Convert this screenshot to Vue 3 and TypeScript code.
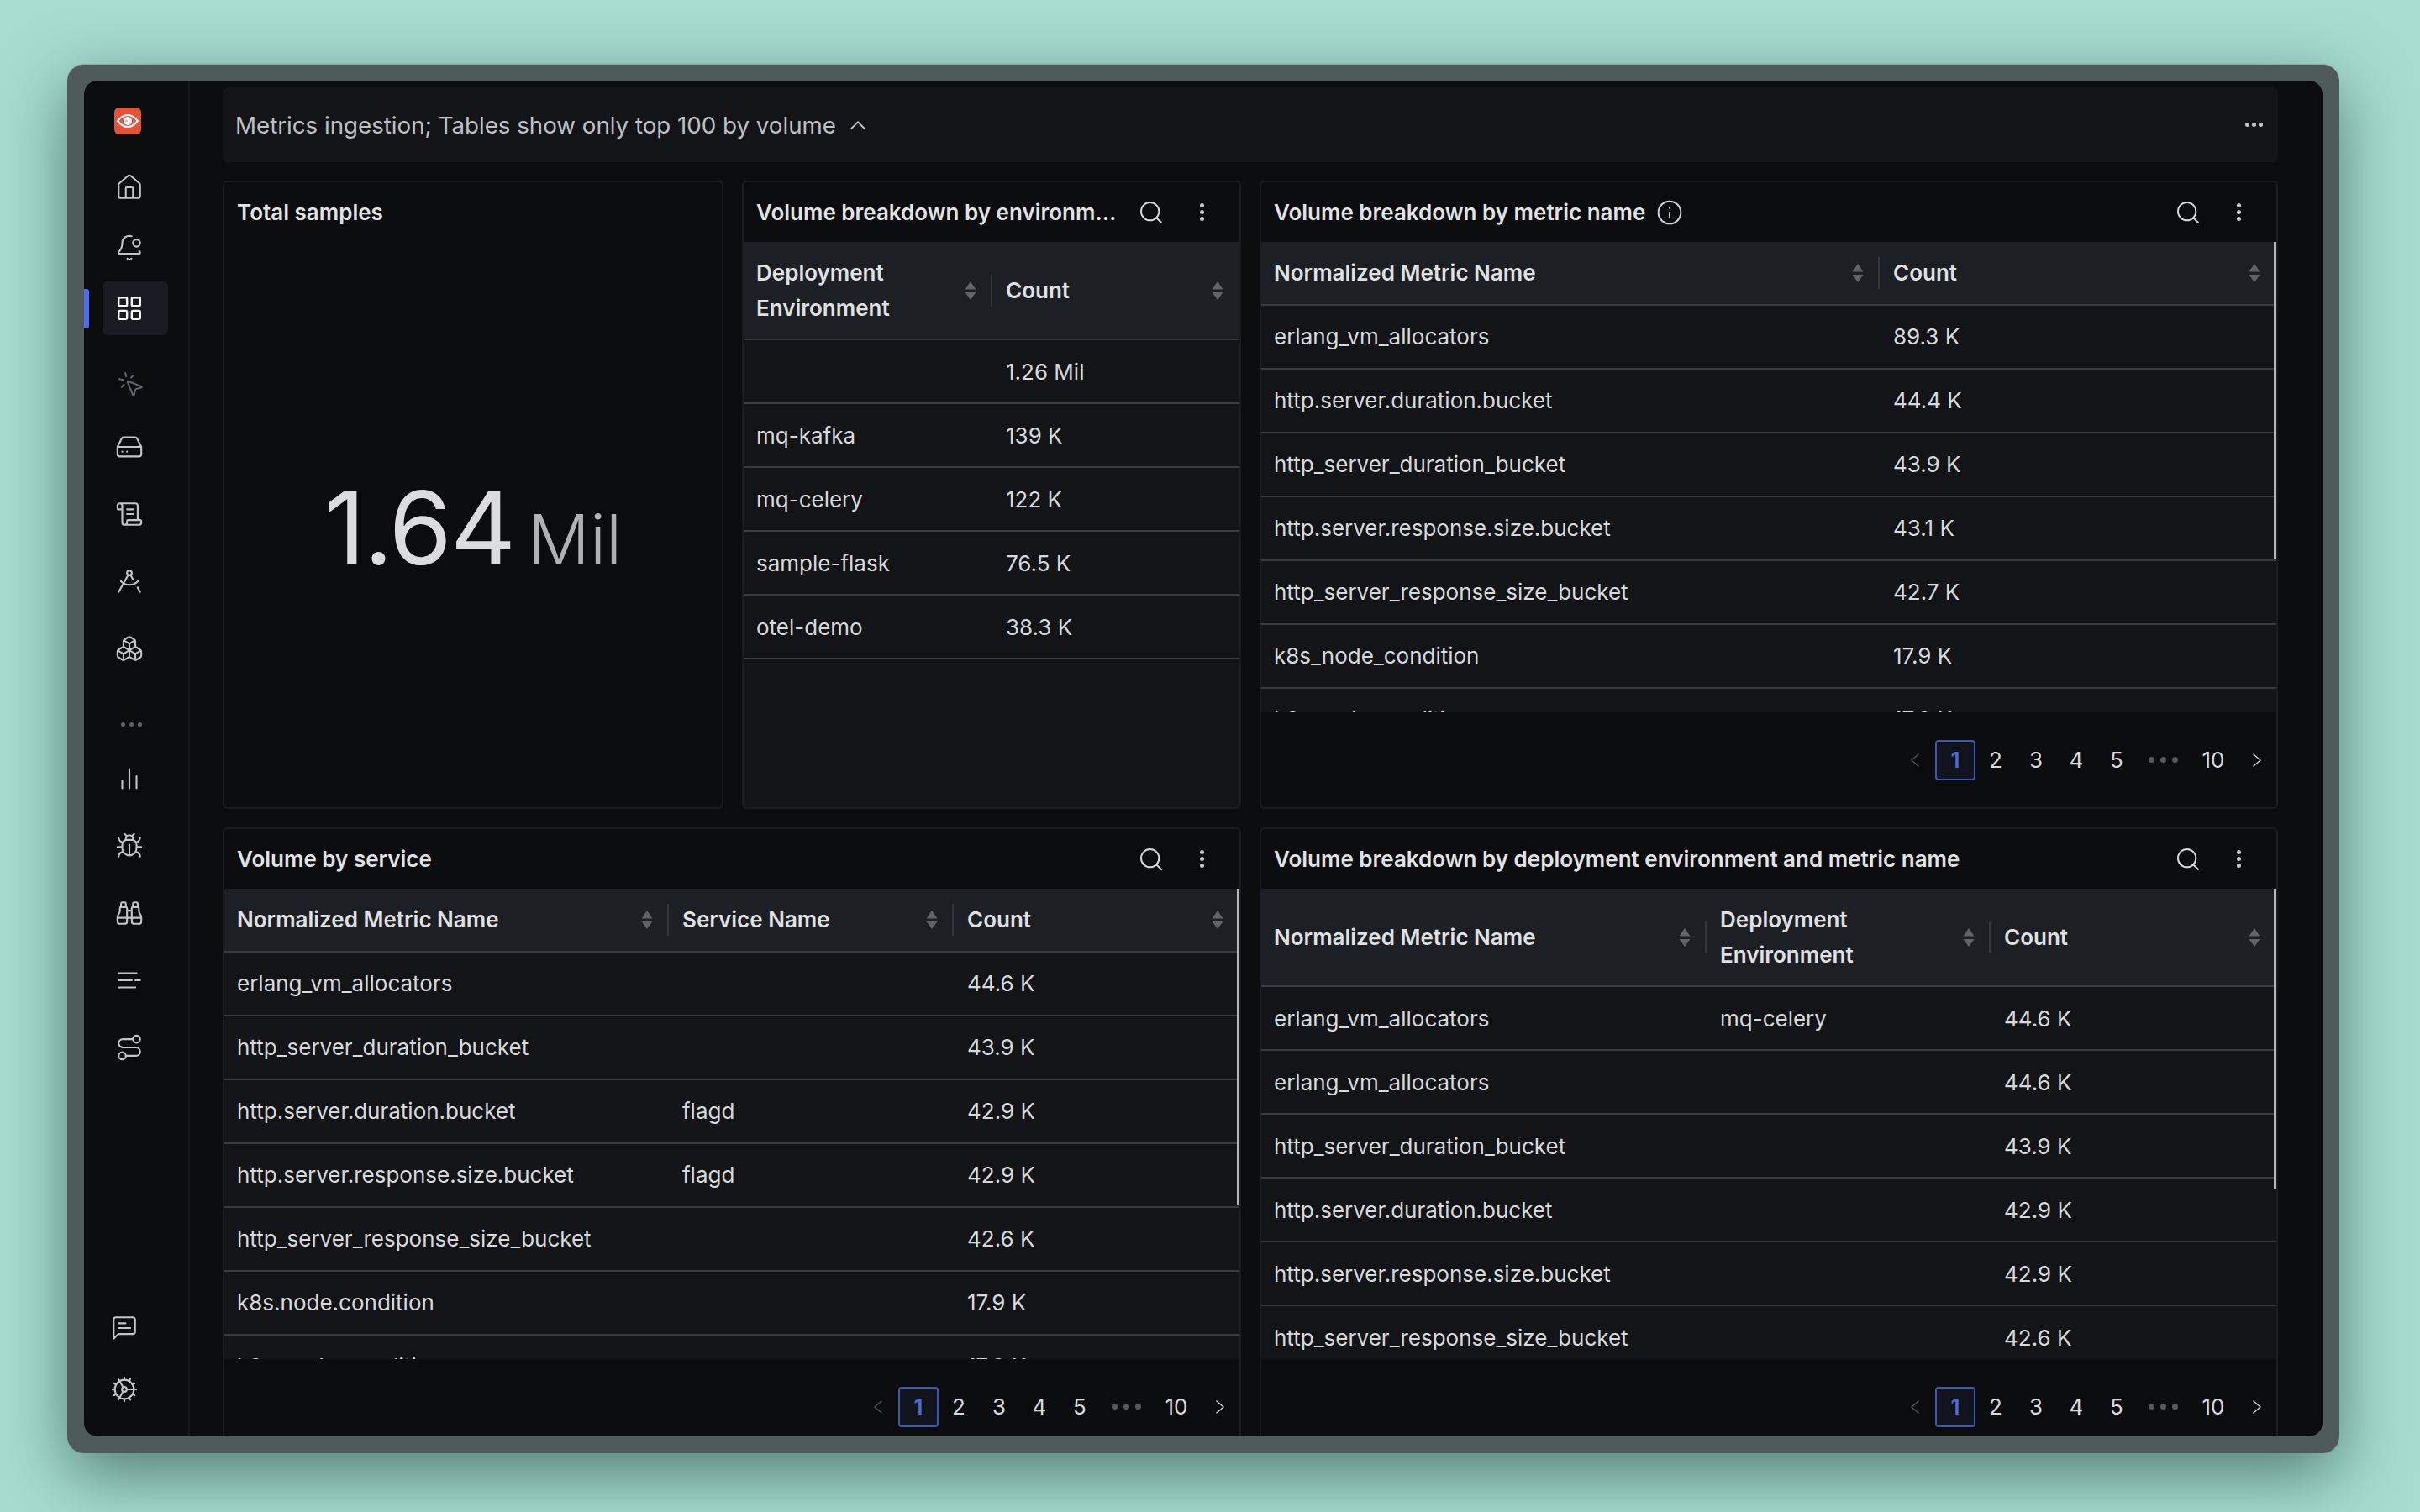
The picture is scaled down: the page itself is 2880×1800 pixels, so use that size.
<script setup lang="ts">
interface Column {
  label: string
  width?: number
}

interface TablePanel {
  title: string
  info?: boolean
  columns: Column[]
  rows: string[][]
  paged: boolean
  scrollbar?: number
}

const icons: Record<string, string> = {
  home: 'M15 21v-8a1 1 0 0 0-1-1h-4a1 1 0 0 0-1 1v8M3 10a2 2 0 0 1 .709-1.528l7-5.999a2 2 0 0 1 2.582 0l7 5.999A2 2 0 0 1 21 10v9a2 2 0 0 1-2 2H5a2 2 0 0 1-2-2z',
  bell: 'M10.268 21a2 2 0 0 0 3.464 0M13.916 2.314A6 6 0 0 0 6 8c0 4.499-1.411 5.956-2.74 7.327A1 1 0 0 0 4 17h16a1 1 0 0 0 .74-1.673 9 9 0 0 1-.585-.665M15 8a3 3 0 1 0 6 0 3 3 0 1 0-6 0',
  grid: 'M4 3h5a1 1 0 0 1 1 1v5a1 1 0 0 1-1 1H4a1 1 0 0 1-1-1V4a1 1 0 0 1 1-1zM15 3h5a1 1 0 0 1 1 1v5a1 1 0 0 1-1 1h-5a1 1 0 0 1-1-1V4a1 1 0 0 1 1-1zM15 14h5a1 1 0 0 1 1 1v5a1 1 0 0 1-1 1h-5a1 1 0 0 1-1-1v-5a1 1 0 0 1 1-1zM4 14h5a1 1 0 0 1 1 1v5a1 1 0 0 1-1 1H4a1 1 0 0 1-1-1v-5a1 1 0 0 1 1-1z',
  click: 'M14 4.1 12 6m-6.9 2-2.9-.8M6 12l-1.9 2M7.2 2.2 8 5.1M9.037 9.69a.498.498 0 0 1 .653-.653l11 4.5a.5.5 0 0 1-.074.949l-4.349 1.041a1 1 0 0 0-.74.739l-1.04 4.35a.5.5 0 0 1-.95.074z',
  drive: 'M22 12H2M5.45 5.11 2 12v6a2 2 0 0 0 2 2h16a2 2 0 0 0 2-2v-6l-3.45-6.89A2 2 0 0 0 16.76 4H7.24a2 2 0 0 0-1.79 1.11zM6 16h.01M10 16h.01',
  scroll: 'M15 12h-5M15 8h-5M19 17V5a2 2 0 0 0-2-2H4M8 21h12a2 2 0 0 0 2-2v-1a1 1 0 0 0-1-1H11a1 1 0 0 0-1 1v1a2 2 0 1 1-4 0V5a2 2 0 1 0-4 0v2a1 1 0 0 0 1 1h3',
  compass: 'm12.99 6.74 1.93 3.44M19.136 12a10 10 0 0 1-14.271 0M21 21l-2.16-3.84M3 21l8.02-14.26M10 5a2 2 0 1 0 4 0 2 2 0 1 0-4 0',
  boxes: 'M2.97 12.92A2 2 0 0 0 2 14.63v3.24a2 2 0 0 0 .97 1.71l3 1.8a2 2 0 0 0 2.06 0L12 19v-5.5l-5-3-4.03 2.42ZM7 16.5l-4.74-2.85M7 16.5l5-3M7 16.5v5.17M12 13.5V19l3.97 2.38a2 2 0 0 0 2.06 0l3-1.8a2 2 0 0 0 .97-1.71v-3.24a2 2 0 0 0-.97-1.71L17 10.5l-5 3ZM17 16.5l-5-3M17 16.5l4.74-2.85M17 16.5v5.17M7.97 4.42A2 2 0 0 0 7 6.13v4.37l5 3 5-3V6.13a2 2 0 0 0-.97-1.71l-3-1.8a2 2 0 0 0-2.06 0l-3 1.8ZM12 8 7.26 5.15M12 8l4.74-2.85M12 13.5V8',
  bars: 'M18 20V10M12 20V4M6 20v-6',
  bug: 'm8 2 1.88 1.88M14.12 3.88 16 2M9 7.13v-1a3.003 3.003 0 1 1 6 0v1M12 20c-3.3 0-6-2.7-6-6v-3a4 4 0 0 1 4-4h4a4 4 0 0 1 4 4v3c0 3.3-2.7 6-6 6M12 20v-9M6.53 9C4.6 8.8 3 7.1 3 5M6 13H2M3 21c0-2.1 1.7-3.9 3.8-4M20.97 5c0 2.1-1.6 3.8-3.5 4M22 13h-4M17.2 17c2.1.1 3.8 1.9 3.8 4',
  binoculars: 'M10 10h4M19 7V4a1 1 0 0 0-1-1h-2a1 1 0 0 0-1 1v3M20 21a2 2 0 0 0 2-2v-3.851c0-1.39-2-2.962-2-4.829V8a1 1 0 0 0-1-1h-4a1 1 0 0 0-1 1v11a2 2 0 0 0 2 2zM22 16H2M4 21a2 2 0 0 1-2-2v-3.851c0-1.39 2-2.962 2-4.829V8a1 1 0 0 1 1-1h4a1 1 0 0 1 1 1v11a2 2 0 0 1-2 2zM9 7V4a1 1 0 0 0-1-1H6a1 1 0 0 0-1 1v3',
  lines: 'M3 6h15M3 12h11M17 12h4M3 18h14',
  route: 'M3 19a3 3 0 1 0 6 0 3 3 0 1 0-6 0M9 19h8.5a3.5 3.5 0 0 0 0-7h-11a3.5 3.5 0 0 1 0-7H15M15 5a3 3 0 1 0 6 0 3 3 0 1 0-6 0',
  chat: 'M21 15a2 2 0 0 1-2 2H7l-4 4V5a2 2 0 0 1 2-2h14a2 2 0 0 1 2 2zM13 8H7M17 12H7',
  cog: 'M12 20a8 8 0 1 0 0-16 8 8 0 0 0 0 16ZM12 14a2 2 0 1 0 0-4 2 2 0 0 0 0 4ZM12 2v2M12 22v-2M17 20.66l-1-1.73M11 10.27 7 3.34M20.66 17l-1.73-1M3.34 7l1.73 1M14 12h8M2 12h2M20.66 7l-1.73 1M3.34 17l1.73-1M17 3.34l-1 1.73M11 13.73l-4 6.93',
  search: 'M21 21l-4.3-4.3M3 11a8 8 0 1 0 16 0 8 8 0 1 0-16 0',
  info: 'M2 12a10 10 0 1 0 20 0 10 10 0 1 0-20 0M12 16v-4M12 8h.01',
  up: 'm18 15-6-6-6 6',
  left: 'M17 3.5 7 12l10 8.5',
  right: 'M7 3.5 17 12 7 20.5',
}

const topNav = ['home', 'bell', 'grid']
const midNav = ['click', 'drive', 'scroll', 'compass', 'boxes']
const lowNav = ['bars', 'bug', 'binoculars', 'lines', 'route']

const envPanel: TablePanel = {
  title: 'Volume breakdown by environment',
  columns: [{ label: 'Deployment Environment', width: 296 }, { label: 'Count' }],
  rows: [
    ['', '1.26 Mil'],
    ['mq-kafka', '139 K'],
    ['mq-celery', '122 K'],
    ['sample-flask', '76.5 K'],
    ['otel-demo', '38.3 K'],
  ],
  paged: false,
}

const metricPanel: TablePanel = {
  title: 'Volume breakdown by metric name',
  info: true,
  columns: [{ label: 'Normalized Metric Name', width: 736 }, { label: 'Count' }],
  rows: [
    ['erlang_vm_allocators', '89.3 K'],
    ['http.server.duration.bucket', '44.4 K'],
    ['http_server_duration_bucket', '43.9 K'],
    ['http.server.response.size.bucket', '43.1 K'],
    ['http_server_response_size_bucket', '42.7 K'],
    ['k8s_node_condition', '17.9 K'],
    ['k8s.node.condition', '17.9 K'],
  ],
  paged: true,
  scrollbar: 377,
}

const servicePanel: TablePanel = {
  title: 'Volume by service',
  columns: [
    { label: 'Normalized Metric Name', width: 529 },
    { label: 'Service Name', width: 339 },
    { label: 'Count' },
  ],
  rows: [
    ['erlang_vm_allocators', '', '44.6 K'],
    ['http_server_duration_bucket', '', '43.9 K'],
    ['http.server.duration.bucket', 'flagd', '42.9 K'],
    ['http.server.response.size.bucket', 'flagd', '42.9 K'],
    ['http_server_response_size_bucket', '', '42.6 K'],
    ['k8s.node.condition', '', '17.9 K'],
    ['k8s_node_condition', '', '17.9 K'],
  ],
  paged: true,
  scrollbar: 376,
}

const envMetricPanel: TablePanel = {
  title: 'Volume breakdown by deployment environment and metric name',
  columns: [
    { label: 'Normalized Metric Name', width: 530 },
    { label: 'Deployment Environment', width: 338 },
    { label: 'Count' },
  ],
  rows: [
    ['erlang_vm_allocators', 'mq-celery', '44.6 K'],
    ['erlang_vm_allocators', '', '44.6 K'],
    ['http_server_duration_bucket', '', '43.9 K'],
    ['http.server.duration.bucket', '', '42.9 K'],
    ['http.server.response.size.bucket', '', '42.9 K'],
    ['http_server_response_size_bucket', '', '42.6 K'],
  ],
  paged: true,
  scrollbar: 358,
}

const rowGroups = [
  { key: 'one', cls: 'grid-row--top', panels: [envPanel, metricPanel], stat: true },
  { key: 'two', cls: 'grid-row--bottom', panels: [servicePanel, envMetricPanel], stat: false },
]
const pages = ['2', '3', '4', '5']
</script>

<template>
  <div class="page">
    <div class="frame">
      <div class="app">
        <aside class="sidebar">
          <div class="logo">
            <svg viewBox="0 0 32 32" width="32" height="32">
              <rect width="32" height="32" rx="6" fill="#e5533a" />
              <path d="M4 16c4-5 8-7 12-7s8 2 12 7c-4 5-8 7-12 7s-8-2-12-7z" fill="none" stroke="#fff" stroke-width="2.200" />
              <circle cx="16" cy="16" r="5" fill="#fff" />
              <circle cx="14.500" cy="16" r="1.500" fill="#e9b3a6" />
            </svg>
          </div>

          <nav class="nav nav--top">
            <a v-for="name in topNav" :key="name" class="nav__item" :class="{ 'nav__item--active': name === 'grid' }">
              <svg class="icon" viewBox="0 0 24 24"><path :d="icons[name]" /></svg>
            </a>
          </nav>

          <nav class="nav nav--mid">
            <a v-for="name in midNav" :key="name" class="nav__item" :class="{ 'nav__item--dim': name === 'click' }">
              <svg class="icon" viewBox="0 0 24 24"><path :d="icons[name]" /></svg>
            </a>
          </nav>

          <div class="nav__more"><i /><i /><i /></div>

          <nav class="nav nav--low">
            <a v-for="name in lowNav" :key="name" class="nav__item">
              <svg class="icon" viewBox="0 0 24 24"><path :d="icons[name]" /></svg>
            </a>
          </nav>

          <nav class="nav nav--foot">
            <a class="nav__item nav__item--foot">
              <svg class="icon" viewBox="0 0 24 24"><path :d="icons.chat" /></svg>
            </a>
            <a class="nav__item nav__item--foot">
              <svg class="icon" viewBox="0 0 24 24"><path :d="icons.cog" /></svg>
            </a>
          </nav>
        </aside>

        <main class="main">
          <header class="topbar">
            <span class="topbar__title">Metrics ingestion; Tables show only top 100 by volume</span>
            <svg class="icon icon--chevron" viewBox="0 0 24 24"><path :d="icons.up" /></svg>
            <span class="topbar__more"><i /><i /><i /></span>
          </header>

          <div v-for="group in rowGroups" :key="group.key" class="grid-row" :class="group.cls">
            <section v-if="group.stat" class="panel">
              <div class="panel__head">
                <h3 class="panel__title">Total samples</h3>
              </div>
              <div class="stat">
                <span class="stat__value">1.64</span>
                <span class="stat__unit">Mil</span>
              </div>
            </section>

            <section v-for="panel in group.panels" :key="panel.title" class="panel">
              <div class="panel__head">
                <h3 class="panel__title">{{ panel.title }}</h3>
                <svg v-if="panel.info" class="icon icon--info" viewBox="0 0 24 24"><path :d="icons.info" /></svg>
                <div class="panel__actions">
                  <svg class="icon icon--search" viewBox="0 0 24 24"><path :d="icons.search" /></svg>
                  <span class="kebab"><i /><i /><i /></span>
                </div>
              </div>

              <div class="table-wrap" :class="{ 'table-wrap--paged': panel.paged }">
                <table class="table">
                  <colgroup>
                    <col
                      v-for="col in panel.columns"
                      :key="col.label"
                      :style="col.width ? { width: col.width + 'px' } : undefined"
                    />
                  </colgroup>
                  <thead>
                    <tr>
                      <th v-for="col in panel.columns" :key="col.label">
                        <div class="th">
                          <span class="th__label">{{ col.label }}</span>
                          <svg class="sort" viewBox="0 0 14 24" width="14" height="24">
                            <path d="M7 1l6.500 9.500H.5zM7 23 .5 14h13z" />
                          </svg>
                        </div>
                      </th>
                    </tr>
                  </thead>
                  <tbody>
                    <tr v-for="(row, i) in panel.rows" :key="i">
                      <td v-for="(cell, j) in row" :key="j">{{ cell }}</td>
                    </tr>
                  </tbody>
                </table>
                <span v-if="panel.scrollbar" class="scrollbar" :style="{ height: panel.scrollbar + 'px' }" />
              </div>

              <footer v-if="panel.paged" class="pager">
                <span class="pager__nav pager__nav--off">
                  <svg class="icon icon--page" viewBox="0 0 24 24"><path :d="icons.left" /></svg>
                </span>
                <span class="pager__item pager__item--active">1</span>
                <span v-for="p in pages" :key="p" class="pager__item">{{ p }}</span>
                <span class="pager__dots"><i /><i /><i /></span>
                <span class="pager__item pager__item--last">10</span>
                <span class="pager__nav pager__nav--next">
                  <svg class="icon icon--page" viewBox="0 0 24 24"><path :d="icons.right" /></svg>
                </span>
              </footer>
            </section>
          </div>
        </main>
      </div>
    </div>
  </div>
</template>

<style>
html,
body {
  margin: 0;
  background: #a6ddd0;
}
</style>

<style scoped>
.page {
  box-sizing: border-box;
  width: 2880px;
  height: 1800px;
  padding: 76px 96px 70px 80px;
  overflow: hidden;
  background: #a6ddd0;
  font-family: Inter, "Noto Sans", sans-serif;
  font-size: 26px;
  color: #d8d9db;
}

.frame {
  box-sizing: border-box;
  height: 100%;
  padding: 19px 20px 20px;
  border-radius: 20px;
  background: #4f5b58;
  border-top: 1px solid #8fa5a0;
  box-shadow: 0 26px 80px rgba(20, 50, 45, 0.55);
}

.app {
  display: flex;
  height: 100%;
  overflow: hidden;
  border-radius: 16px;
  background: #0b0c0e;
}

.sidebar {
  box-sizing: border-box;
  display: flex;
  flex: 0 0 126px;
  flex-direction: column;
  padding: 32px 0 24px;
  border-right: 2px solid #17191c;
}

.logo {
  display: flex;
  height: 32px;
  padding-left: 36px;
}

.nav {
  display: flex;
  flex-direction: column;
}

.nav--top {
  gap: 8px;
  margin-top: 31px;
}

.nav--mid {
  gap: 16px;
  margin-top: 27px;
}

.nav--low {
  gap: 16px;
  margin-top: 23px;
}

.nav--foot {
  gap: 9px;
  margin-top: auto;
}

.nav__item {
  position: relative;
  display: flex;
  align-items: center;
  box-sizing: border-box;
  width: 78px;
  height: 64px;
  margin-left: 22px;
  padding-left: 15px;
  border-radius: 6px;
  color: #c3c4c7;
}

.nav__item--active {
  background: #1a1c24;
  color: #fff;
}

.nav__item--active::before {
  content: "";
  position: absolute;
  top: 9px;
  left: -22px;
  width: 6px;
  height: 47px;
  border-radius: 0 3px 3px 0;
  background: #4e6ef2;
}

.nav__item--dim {
  margin-bottom: -6px;
  padding-left: 17px;
  color: #5f626c;
}

.nav__item--foot {
  padding-left: 9px;
}

.nav__more {
  display: flex;
  gap: 5px;
  align-items: center;
  height: 20px;
  margin-top: 48px;
  padding-left: 44px;
}

.nav__more i {
  width: 5px;
  height: 5px;
  border-radius: 50%;
  background: #5f626c;
}

.icon {
  width: 34px;
  height: 34px;
  flex: none;
  fill: none;
  stroke: currentColor;
  stroke-width: 1.500;
  stroke-linecap: round;
  stroke-linejoin: round;
}

.nav__item--active .icon {
  stroke-width: 1.700;
}

.main {
  display: flex;
  flex: 1;
  flex-direction: column;
  gap: 22px;
  min-width: 0;
  padding: 8px 53px 0 39px;
}

.topbar {
  display: flex;
  flex: 0 0 89px;
  align-items: center;
  box-sizing: border-box;
  padding: 0 18px 0 15px;
  border-radius: 6px;
  background: #121417;
  color: #bfc0c4;
  font-size: 27.700px;
}

.icon--chevron {
  width: 30px;
  height: 30px;
  margin-left: 11px;
  color: #c0c1c5;
}

.topbar__more {
  display: flex;
  gap: 3px;
  margin-left: auto;
}

.topbar__more i {
  width: 5px;
  height: 5px;
  border-radius: 50%;
  background: #c4c5c8;
}

.grid-row {
  display: grid;
  flex: 0 0 748px;
  gap: 22px;
}

.grid-row--top {
  grid-template-columns: 596px 594px 1fr;
}

.grid-row--bottom {
  grid-template-columns: 1212px 1fr;
}

.panel {
  box-sizing: border-box;
  display: flex;
  flex-direction: column;
  min-width: 0;
  height: 748px;
  overflow: hidden;
  border: 2px solid #1a1c1f;
  border-radius: 6px;
  background: #0b0c0e;
}

.panel__head {
  display: flex;
  flex: 0 0 71px;
  align-items: center;
  padding: 0 42px 0 15px;
}

.panel__title {
  min-width: 0;
  overflow: hidden;
  margin: 0;
  color: #e2e3e5;
  font-size: 26px;
  font-weight: 600;
  white-space: nowrap;
  text-overflow: ellipsis;
}

.icon--info {
  width: 32px;
  height: 32px;
  margin-left: 13px;
  color: #d2d3d6;
}

.panel__actions {
  display: flex;
  flex: none;
  align-items: center;
  gap: 42px;
  margin-left: auto;
  padding-left: 24px;
  color: #d6d7d9;
}

.icon--search {
  width: 32px;
  height: 32px;
}

.kebab {
  display: flex;
  flex-direction: column;
  gap: 3px;
}

.kebab i {
  width: 5px;
  height: 5px;
  border-radius: 50%;
  background: #c4c5c8;
}

.stat {
  display: flex;
  flex: 1;
  align-items: baseline;
  justify-content: center;
  gap: 16px;
  padding-top: 268px;
  font-weight: 400;
}

.stat__value {
  color: #dcdcde;
  font-size: 121px;
  letter-spacing: -2px;
  line-height: 1.200;
}

.stat__unit {
  color: #b0b1b3;
  font-size: 82px;
  font-weight: 300;
  line-height: 1.200;
}

.table-wrap {
  position: relative;
  flex: 1;
  overflow: hidden;
  background: #121417;
}

.table-wrap--paged {
  flex: 0 0 560px;
}

.table {
  width: 100%;
  table-layout: fixed;
  border-collapse: separate;
  border-spacing: 0;
}

th {
  padding: 0;
  background: #1c1f23;
  border-bottom: 2px solid #383b40;
  color: #e0e1e3;
  font-weight: 600;
  text-align: left;
}

.th {
  position: relative;
  display: flex;
  align-items: center;
  justify-content: space-between;
  box-sizing: border-box;
  min-height: 73px;
  padding: 16px 19px 16px 16px;
  line-height: 41.500px;
}

th:first-child .th {
  padding-left: 15px;
}

th:not(:last-child) .th::after {
  content: "";
  position: absolute;
  top: 50%;
  right: 0;
  width: 2px;
  height: 38px;
  margin-top: -19px;
  background: #33363a;
}

.th__label {
  padding-right: 20px;
}

.sort {
  flex: none;
  fill: #616367;
}

td {
  box-sizing: border-box;
  height: 76px;
  padding: 0 16px;
  border-bottom: 2px solid #383b40;
  color: #d8d9db;
  white-space: nowrap;
}

td:first-child {
  padding-left: 15px;
}

.scrollbar {
  position: absolute;
  top: 0;
  right: 0;
  width: 3px;
  background: #b5b7ba;
}

.pager {
  display: flex;
  flex: 1;
  align-items: center;
  justify-content: flex-end;
  min-height: 0;
}

.pager__item,
.pager__nav {
  display: flex;
  align-items: center;
  justify-content: center;
  box-sizing: border-box;
  width: 48px;
  height: 48px;
  border-radius: 4px;
  color: #d8d9db;
}

.pager__item--active {
  border: 2px solid #3d57b3;
  background: #11141c;
  color: #4e6bd6;
  font-weight: 600;
}

.pager__item--last {
  width: 58px;
}

.pager__nav--off {
  color: #55585d;
}

.pager__nav--next {
  width: 46px;
}

.icon--page {
  width: 20px;
  height: 20px;
}

.pager__dots {
  display: flex;
  align-items: center;
  justify-content: center;
  gap: 7px;
  width: 62px;
}

.pager__dots i {
  width: 7px;
  height: 7px;
  border-radius: 50%;
  background: #55585d;
}
</style>
